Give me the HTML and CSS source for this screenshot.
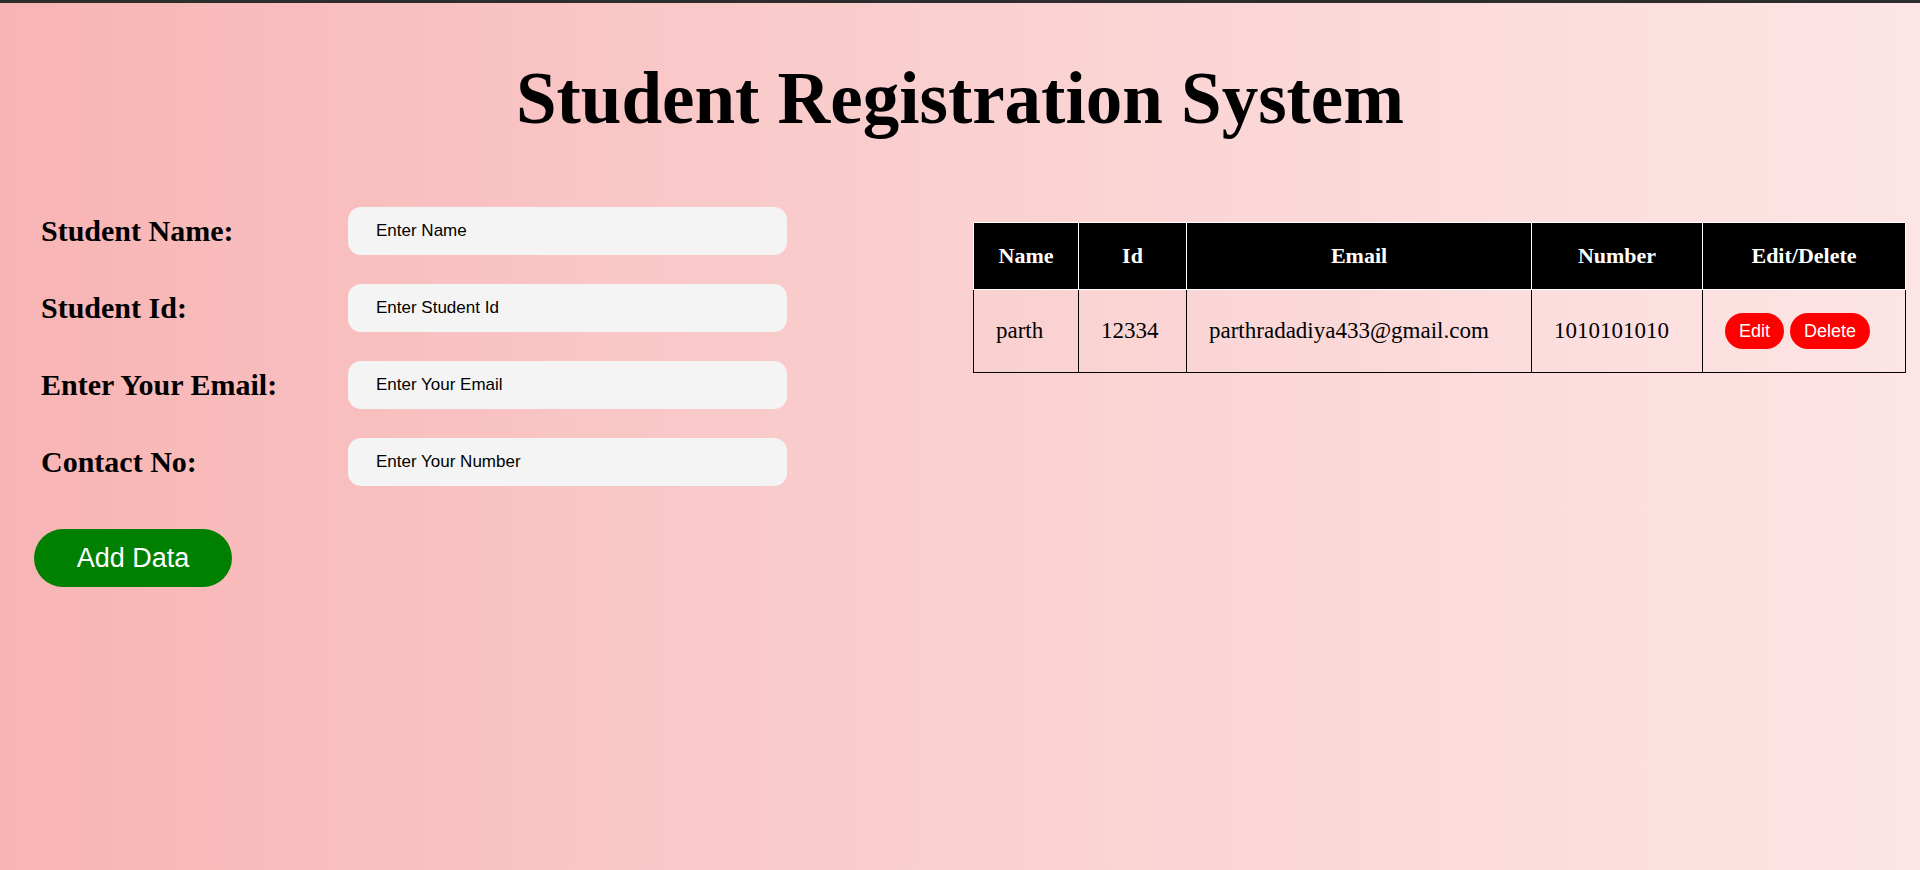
FILE: index.html
```html
<!DOCTYPE html>
<html lang="en">
<head>
<meta charset="utf-8">
<title>Student Registration System</title>
<link rel="stylesheet" href="styles.css">
</head>
<body>
<div class="topbar"></div>
<h1 class="title">Student Registration System</h1>
<main class="main">
  <form class="form">
    <div class="row">
      <label class="label" for="name">Student Name:</label>
      <input class="field" id="name" type="text" placeholder="Enter Name">
    </div>
    <div class="row">
      <label class="label" for="sid">Student Id:</label>
      <input class="field" id="sid" type="text" placeholder="Enter Student Id">
    </div>
    <div class="row">
      <label class="label" for="email">Enter Your Email:</label>
      <input class="field" id="email" type="text" placeholder="Enter Your Email">
    </div>
    <div class="row">
      <label class="label" for="num">Contact No:</label>
      <input class="field" id="num" type="text" placeholder="Enter Your Number">
    </div>
    <button class="add-btn" type="button">Add Data</button>
  </form>
  <table class="table">
    <colgroup>
      <col class="c-name">
      <col class="c-id">
      <col class="c-email">
      <col class="c-num">
      <col class="c-act">
    </colgroup>
    <thead>
      <tr>
        <th>Name</th>
        <th>Id</th>
        <th>Email</th>
        <th>Number</th>
        <th>Edit/Delete</th>
      </tr>
    </thead>
    <tbody>
      <tr>
        <td>parth</td>
        <td>12334</td>
        <td>parthradadiya433@gmail.com</td>
        <td>1010101010</td>
        <td><button class="small-btn" type="button">Edit</button><button class="small-btn" type="button">Delete</button></td>
      </tr>
    </tbody>
  </table>
</main>
</body>
</html>
```
FILE: styles.css
```css
html, body {
  margin: 0;
  padding: 0;
}
body {
  min-height: 870px;
  background: linear-gradient(to right, #f8b4b4 0%, #fad0d0 50%, #fde5e5 100%);
  font-family: "Liberation Serif", "Times New Roman", serif;
  color: #000;
}
.topbar {
  height: 3px;
  background: #2d2d2d;
}
.title {
  margin: 0;
  padding-top: 56px;
  font-size: 73px;
  line-height: 80px;
  font-weight: bold;
  text-align: center;
}
.main {
  display: flex;
  justify-content: space-between;
  align-items: flex-start;
  padding: 0 14px 0 34px;
  margin-top: 68px;
}
.form {
  display: flex;
  flex-direction: column;
  gap: 29px;
  width: 753px;
}
.row {
  display: flex;
  align-items: center;
  height: 48px;
}
.label {
  width: 307px;
  padding-left: 7px;
  font-size: 30px;
  font-weight: bold;
}
.field {
  box-sizing: border-box;
  width: 439px;
  height: 48px;
  border: none;
  border-radius: 13px;
  background: #f4f4f4;
  padding: 0 0 0 28px;
  font-family: "Liberation Sans", Arial, sans-serif;
  font-size: 17px;
  color: #000;
  outline: none;
}
.field::placeholder {
  color: #000;
  opacity: 1;
}
.add-btn {
  align-self: flex-start;
  margin-top: 14px;
  width: 198px;
  height: 58px;
  border: none;
  border-radius: 29px;
  background: #008000;
  color: #fff;
  font-family: "Liberation Sans", Arial, sans-serif;
  font-size: 27px;
  padding: 0;
  cursor: pointer;
}
.table {
  margin-top: 15px;
  width: 932px;
  table-layout: fixed;
  border-collapse: collapse;
}
.c-name { width: 105px; }
.c-id { width: 108px; }
.c-email { width: 345px; }
.c-num { width: 171px; }
.c-act { width: 203px; }
.table th {
  height: 66px;
  padding: 0;
  background: #000;
  color: #fff;
  border: 1px solid #fff;
  font-size: 22px;
  font-weight: bold;
  text-align: center;
}
.table td {
  height: 82px;
  padding: 0 0 0 22px;
  border: 1px solid #000;
  font-size: 23px;
  text-align: left;
  vertical-align: middle;
  white-space: nowrap;
}
.small-btn {
  height: 36px;
  padding: 0 14px;
  margin-right: 6px;
  border: none;
  border-radius: 18px;
  background: #ff0000;
  color: #fff;
  font-family: "Liberation Sans", Arial, sans-serif;
  font-size: 18px;
  vertical-align: middle;
  cursor: pointer;
}
```
